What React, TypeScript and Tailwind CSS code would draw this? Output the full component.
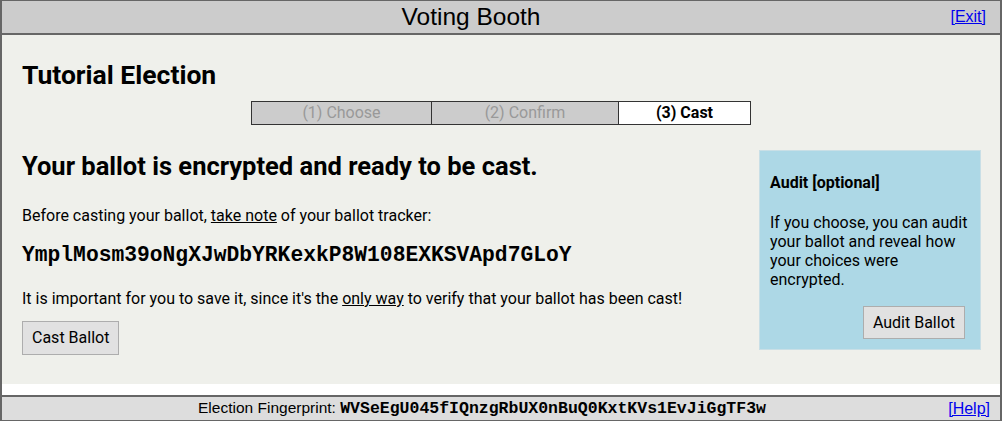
export default function App() {
  return (
    <div className="w-[1002px] h-[421px] flex flex-col border border-[#666] border-l-2 border-r-2 bg-white font-['Roboto',sans-serif] text-[16px] text-black">
      {/* header */}
      <div className="relative h-[34px] shrink-0 bg-[#cccccc] border-b-2 border-[#666] flex items-center justify-center pr-[60px]">
        <span className="font-['Liberation_Sans',sans-serif] text-[24.5px] leading-none">Voting Booth</span>
        <a href="#" className="absolute right-[14px] top-[8px] font-['Liberation_Sans',sans-serif] text-[16px] text-[#0000ee] underline leading-none">[Exit]</a>
      </div>

      {/* body */}
      <div className="h-[349px] shrink-0 bg-[#eff0eb] px-[20px] pt-[25px]">
        <h1 className="text-[26.5px] font-bold leading-[30px]">Tutorial Election</h1>
        <div className="flex justify-center mt-[11px]">
          <table className="border-collapse text-[16px]">
            <tbody>
              <tr className="h-[23px]">
                <td className="w-[180px] border border-[#333] bg-[#cccccc] text-[#999] text-center leading-[20px] p-0">(1) Choose</td>
                <td className="w-[187px] border border-[#333] bg-[#cccccc] text-[#999] text-center leading-[20px] p-0">(2) Confirm</td>
                <td className="w-[132px] border border-[#333] bg-white font-bold text-center leading-[20px] p-0">(3) Cast</td>
              </tr>
            </tbody>
          </table>
        </div>
        <div className="flex mt-[26px]">
          <div className="flex-1">
            <h2 className="text-[25.5px] font-bold leading-[30px]">Your ballot is encrypted and ready to be cast.</h2>
            <p className="mt-[25px] leading-[20px]">
              Before casting your ballot, <u>take note</u> of your ballot tracker:
            </p>
            <p className="mt-[16px] font-['Liberation_Mono',monospace] font-bold text-[21.3px] leading-[26px]">
              YmplMosm39oNgXJwDbYRKexkP8W108EXKSVApd7GLoY
            </p>
            <p className="mt-[21px] leading-[20px]">
              It is important for you to save it, since it's the <u>only way</u> to verify that your ballot has been cast!
            </p>
            <button className="mt-[12px] h-[34px] px-[9px] bg-[#e1e1e1] border border-[#adadad] text-[16px]">Cast Ballot</button>
          </div>
          <div className="w-[222px] h-[200px] mr-[-1px] mt-[-1px] bg-[#add8e6] border border-[#c9dfe6] px-[10px] pt-[22px] flex flex-col">
            <div className="font-bold leading-[20px]">Audit [optional]</div>
            <p className="mt-[20px] leading-[19px]">
              If you choose, you can audit your ballot and reveal how your choices were encrypted.
            </p>
            <div className="flex justify-end mt-[17px] pr-[5px]">
              <button className="h-[33px] px-[9px] bg-[#e1e1e1] border border-[#adadad] text-[16px]">Audit Ballot</button>
            </div>
          </div>
        </div>
      </div>

      {/* white strip */}
      <div className="flex-1 bg-white" />

      {/* footer */}
      <div className="relative h-[25px] shrink-0 bg-[#dddddd] border-t-2 border-[#666] flex items-center justify-center pr-[38px]">
        <span className="font-['Liberation_Sans',sans-serif] text-[15.5px] leading-none">
          Election Fingerprint:{' '}
          <span className="font-['Liberation_Mono',monospace] font-bold text-[16.5px]">WVSeEgU045fIQnzgRbUX0nBuQ0KxtKVs1EvJiGgTF3w</span>
        </span>
        <a href="#" className="absolute right-[10px] top-[4px] font-['Liberation_Sans',sans-serif] text-[16px] text-[#0000ee] underline leading-none">[Help]</a>
      </div>
    </div>
  );
}
